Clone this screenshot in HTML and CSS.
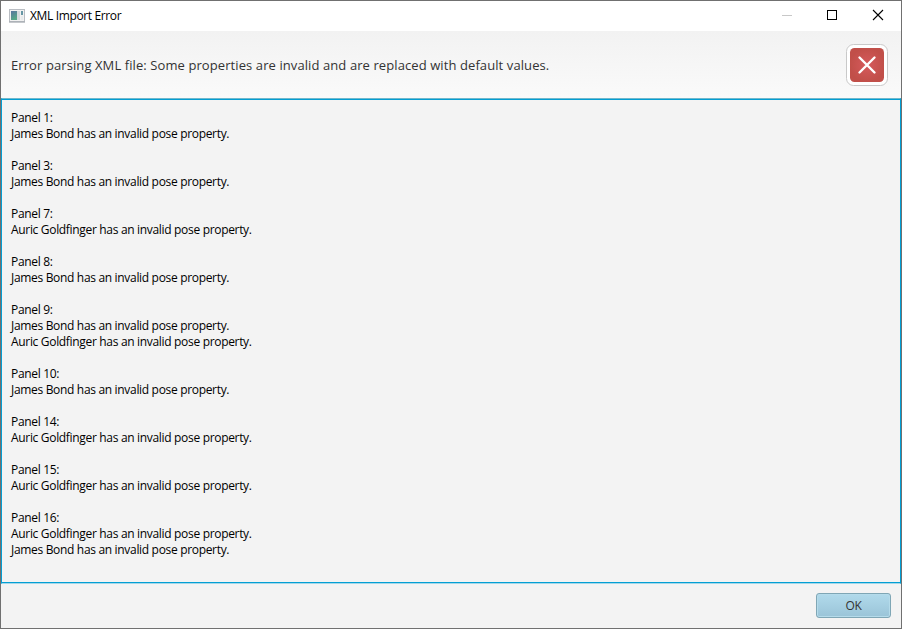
FILE: index.html
```html
<!DOCTYPE html>
<html lang="en">
<head>
<meta charset="utf-8">
<title>XML Import Error</title>
<link rel="stylesheet" href="styles.css">
</head>
<body>
<div class="window">
  <div class="titlebar">
    <svg class="app-icon" width="16" height="14" viewBox="0 0 16 14">
      <defs><linearGradient id="pane" x1="0" y1="0" x2="0.4" y2="1"><stop offset="0" stop-color="#5874a0"/><stop offset="1" stop-color="#56a886"/></linearGradient></defs>
      <rect x="0.5" y="0.5" width="15" height="12.5" fill="#f1f1f1" stroke="#b9bdc2"/>
      <rect x="0" y="12" width="16" height="1.5" fill="#adb2b8"/>
      <rect x="2" y="2" width="6" height="9" fill="url(#pane)"/>
      <rect x="8" y="2" width="3" height="9" fill="#d5dadd"/>
      <rect x="12" y="2" width="2" height="4" fill="#6696a4"/>
      <rect x="12" y="7" width="2" height="4" fill="#e8eaeb"/>
    </svg>
    <span class="title">XML Import Error</span>
    <div class="controls">
      <svg width="46" height="30" viewBox="0 0 46 30"><rect x="19" y="14" width="10" height="1" fill="#c8c8c8"/></svg>
      <svg width="46" height="30" viewBox="0 0 46 30"><rect x="18.5" y="9.5" width="9" height="9" fill="none" stroke="#000"/></svg>
      <svg width="46" height="30" viewBox="0 0 46 30"><path d="M18 9l10 10M28 9l-10 10" fill="none" stroke="#000" stroke-width="1.1"/></svg>
    </div>
  </div>
  <div class="header">
    <p class="message">Error parsing XML file: Some properties are invalid and are replaced with default values.</p>
    <svg class="error-icon" width="42" height="42" viewBox="0 0 42 42">
      <defs><radialGradient id="red"><stop offset="0" stop-color="#d65a5c"/><stop offset="1" stop-color="#c14f49"/></radialGradient></defs>
      <rect x="0.5" y="0.5" width="41" height="41" rx="7" fill="#fff" stroke="#c9c9c9"/>
      <rect x="4" y="4" width="34" height="34" rx="4.5" fill="url(#red)"/>
      <path d="M13.5 13.5l15 15M28.5 13.5l-15 15" fill="none" stroke="#fff" stroke-width="2.4" stroke-linecap="round"/>
    </svg>
  </div>
  <pre class="details">Panel 1:
James Bond has an invalid pose property.

Panel 3:
James Bond has an invalid pose property.

Panel 7:
Auric Goldfinger has an invalid pose property.

Panel 8:
James Bond has an invalid pose property.

Panel 9:
James Bond has an invalid pose property.
Auric Goldfinger has an invalid pose property.

Panel 10:
James Bond has an invalid pose property.

Panel 14:
Auric Goldfinger has an invalid pose property.

Panel 15:
Auric Goldfinger has an invalid pose property.

Panel 16:
Auric Goldfinger has an invalid pose property.
James Bond has an invalid pose property.</pre>
  <div class="footer"><button class="ok">OK</button></div>
</div>
</body>
</html>
```
FILE: styles.css
```css
* { box-sizing: border-box; }
body {
  margin: 0;
  font-family: "Open Sans", "Noto Sans", sans-serif;
  font-size: 12px;
}
.window {
  display: flex;
  flex-direction: column;
  width: 902px;
  height: 629px;
  border: 1px solid #707070;
  background: #f3f3f3;
}
.titlebar {
  display: flex;
  align-items: center;
  flex: 0 0 30px;
  padding-left: 8px;
  background: #fff;
}
.app-icon { margin-top: -1px; }
.title {
  flex: 1;
  margin: -1px 0 0 5px;
  color: #000;
  letter-spacing: -0.36px;
}
.controls { display: flex; }
.header {
  display: flex;
  align-items: center;
  justify-content: space-between;
  flex: 0 0 67px;
  padding: 0 13px 0 10px;
  background: linear-gradient(#f2f2f2, #fafafa);
}
.message {
  margin: 0;
  font-size: 13px;
  letter-spacing: 0.09px;
  color: #333;
  white-space: nowrap;
}
.error-icon { margin-top: 1px; }
.details {
  flex: 0 0 486px;
  margin: 0;
  padding: 10px 9px 0;
  border: 1px solid #039ed3;
  border-top-color: #70b8cc;
  border-bottom-color: #a3d8ea;
  box-shadow: inset 0 1px #039ed3, inset 0 -1px #039ed3;
  padding-top: 11px;
  font: inherit;
  line-height: 16px;
  letter-spacing: -0.32px;
  color: #000;
}
.footer {
  flex: 1;
  display: flex;
  justify-content: flex-end;
  padding: 9px 10px 0 0;
}
.ok {
  width: 75px;
  height: 25px;
  padding: 0;
  border: 1px solid #7fa6b5;
  border-radius: 3px;
  background: linear-gradient(#b1daeb, #9ac4d8);
  box-shadow: inset 0 0 0 1px #b5dbea;
  font: inherit;
  letter-spacing: -0.3px;
  color: #333;
}
```
